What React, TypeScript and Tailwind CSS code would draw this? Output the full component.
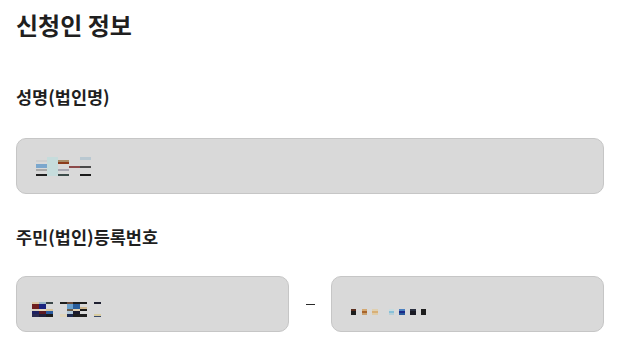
import React from 'react';

type Cell = [number, number, number, number, string];

// pixelated (mosaic) values shown in the inputs, coordinates relative to each svg
const nameMosaic: Cell[] = [
  [0, 3, 11, 2, '#cfcfcf'],
  [0, 7, 11, 4, '#7ba7cd'],
  [0, 12, 11, 2, '#a9a9a9'],
  [0, 17, 11, 2, '#1e1e1e'],
  [11, 0, 11, 19, '#c6dcdc'],
  [22, 3, 11, 2, '#a68a66'],
  [22, 5, 11, 2, '#8b3b1b'],
  [22, 12, 11, 2, '#a7a7b1'],
  [22, 17, 11, 2, '#3b4b49'],
  [33, 9, 11, 2, '#8c4a4a'],
  [44, 0, 11, 3, '#b9c8d1'],
  [44, 9, 11, 2, '#4a4a4a'],
  [44, 17, 11, 2, '#1b1b1b'],
];

const idMosaic: Cell[] = [
  [0, 0, 7, 2, '#d9c9a8'],
  [0, 2, 7, 5, '#6e1e1e'],
  [0, 7, 7, 2, '#d8cfbf'],
  [0, 9, 7, 3, '#1e2060'],
  [0, 12, 7, 3, '#2a2a50'],
  [7, 0, 7, 2, '#9ab6c6'],
  [7, 2, 7, 5, '#1a237e'],
  [7, 7, 7, 2, '#e3d8c0'],
  [7, 9, 7, 3, '#5c1a22'],
  [7, 12, 7, 3, '#1f1f3a'],
  [14, 0, 7, 2, '#3a4648'],
  [14, 7, 7, 2, '#d8c49c'],
  [14, 9, 7, 3, '#2a5aa0'],
  [14, 12, 7, 3, '#1c1c1c'],
  [28, 0, 7, 2, '#1e1e1e'],
  [28, 12, 7, 3, '#e0d6bc'],
  [35, 0, 6, 2, '#6a4a3a'],
  [35, 2, 6, 5, '#6aa0cc'],
  [35, 7, 6, 2, '#6a5a4a'],
  [35, 9, 6, 3, '#b0c8d8'],
  [35, 12, 6, 3, '#1e2a50'],
  [41, 0, 7, 2, '#1e1e1e'],
  [41, 2, 7, 5, '#2a5e9c'],
  [41, 7, 7, 2, '#e0d0b0'],
  [41, 9, 7, 3, '#1a1a2e'],
  [41, 12, 7, 3, '#1e1e1e'],
  [48, 0, 7, 2, '#1e1e1e'],
  [48, 5, 7, 3, '#d0b890'],
  [48, 7, 7, 2, '#1a1a1a'],
  [48, 12, 7, 3, '#1e1e1e'],
  [62, 0, 7, 2, '#1e2030'],
  [62, 12, 7, 3, '#d8cca0'],
  [62, 14, 7, 1, '#3a4a6a'],
];

const backMosaic: Cell[] = [
  [0, 0, 5, 2, '#5a2e1e'],
  [0, 2, 5, 4, '#1e1e1e'],
  [11, 0, 5, 2, '#d4a870'],
  [11, 2, 5, 2, '#a8642a'],
  [11, 4, 5, 2, '#c8a070'],
  [21, 0, 6, 2, '#e0d0b0'],
  [21, 2, 6, 2, '#d8b078'],
  [21, 4, 6, 2, '#e0cca8'],
  [38, 0, 5, 2, '#c8dce0'],
  [38, 2, 5, 2, '#88c0d8'],
  [38, 4, 5, 2, '#b8d0d8'],
  [48, 0, 6, 2, '#4a80c0'],
  [48, 2, 6, 2, '#1a2a8a'],
  [48, 4, 6, 2, '#2a5a9a'],
  [59, 0, 6, 2, '#2a3040'],
  [59, 2, 6, 4, '#1a1a24'],
  [70, 0, 5, 6, '#1e1e1e'],
];

function Mosaic({ cells, w, h }: { cells: Cell[]; w: number; h: number }) {
  return (
    <svg width={w} height={h} viewBox={`0 0 ${w} ${h}`} shapeRendering="crispEdges" aria-hidden>
      {cells.map(([x, y, cw, ch, c], i) => (
        <rect key={i} x={x} y={y} width={cw} height={ch} fill={c} />
      ))}
    </svg>
  );
}

function Field({ children, className = '' }: { children: React.ReactNode; className?: string }) {
  return (
    <div
      className={`flex h-[56px] items-center rounded-[10px] border border-[#c6c6c6] bg-[#d9d9d9] pl-[19px] ${className}`}
    >
      {children}
    </div>
  );
}

export default function App() {
  return (
    <div
      className="min-h-screen bg-white pl-4 pr-5 pt-[7px] text-[#1f1f1f]"
      style={{ fontFamily: '"Noto Sans CJK KR", "Noto Sans", sans-serif' }}
    >
      <h2 className="text-[24px] font-bold leading-[36px]">신청인 정보</h2>

      <div className="mt-[42px] text-[17.5px] font-bold leading-[24px]">성명(법인명)</div>
      <Field className="mt-[29px]">
        <div className="pt-[1px]">
          <Mosaic cells={nameMosaic} w={55} h={19} />
        </div>
      </Field>

      <div className="mt-[31px] text-[17.5px] font-bold leading-[24px]">주민(법인)등록번호</div>
      <div className="mt-[27px] flex items-center">
        <Field className="flex-1">
          <div className="-ml-[4px] pt-[10px]">
            <Mosaic cells={idMosaic} w={69} h={15} />
          </div>
        </Field>
        <div className="flex w-[42px] justify-center">
          <span className="h-px w-[9px] bg-[#2a2a2a]" />
        </div>
        <Field className="flex-1">
          <div className="pt-[16px]">
            <Mosaic cells={backMosaic} w={75} h={6} />
          </div>
        </Field>
      </div>
    </div>
  );
}
